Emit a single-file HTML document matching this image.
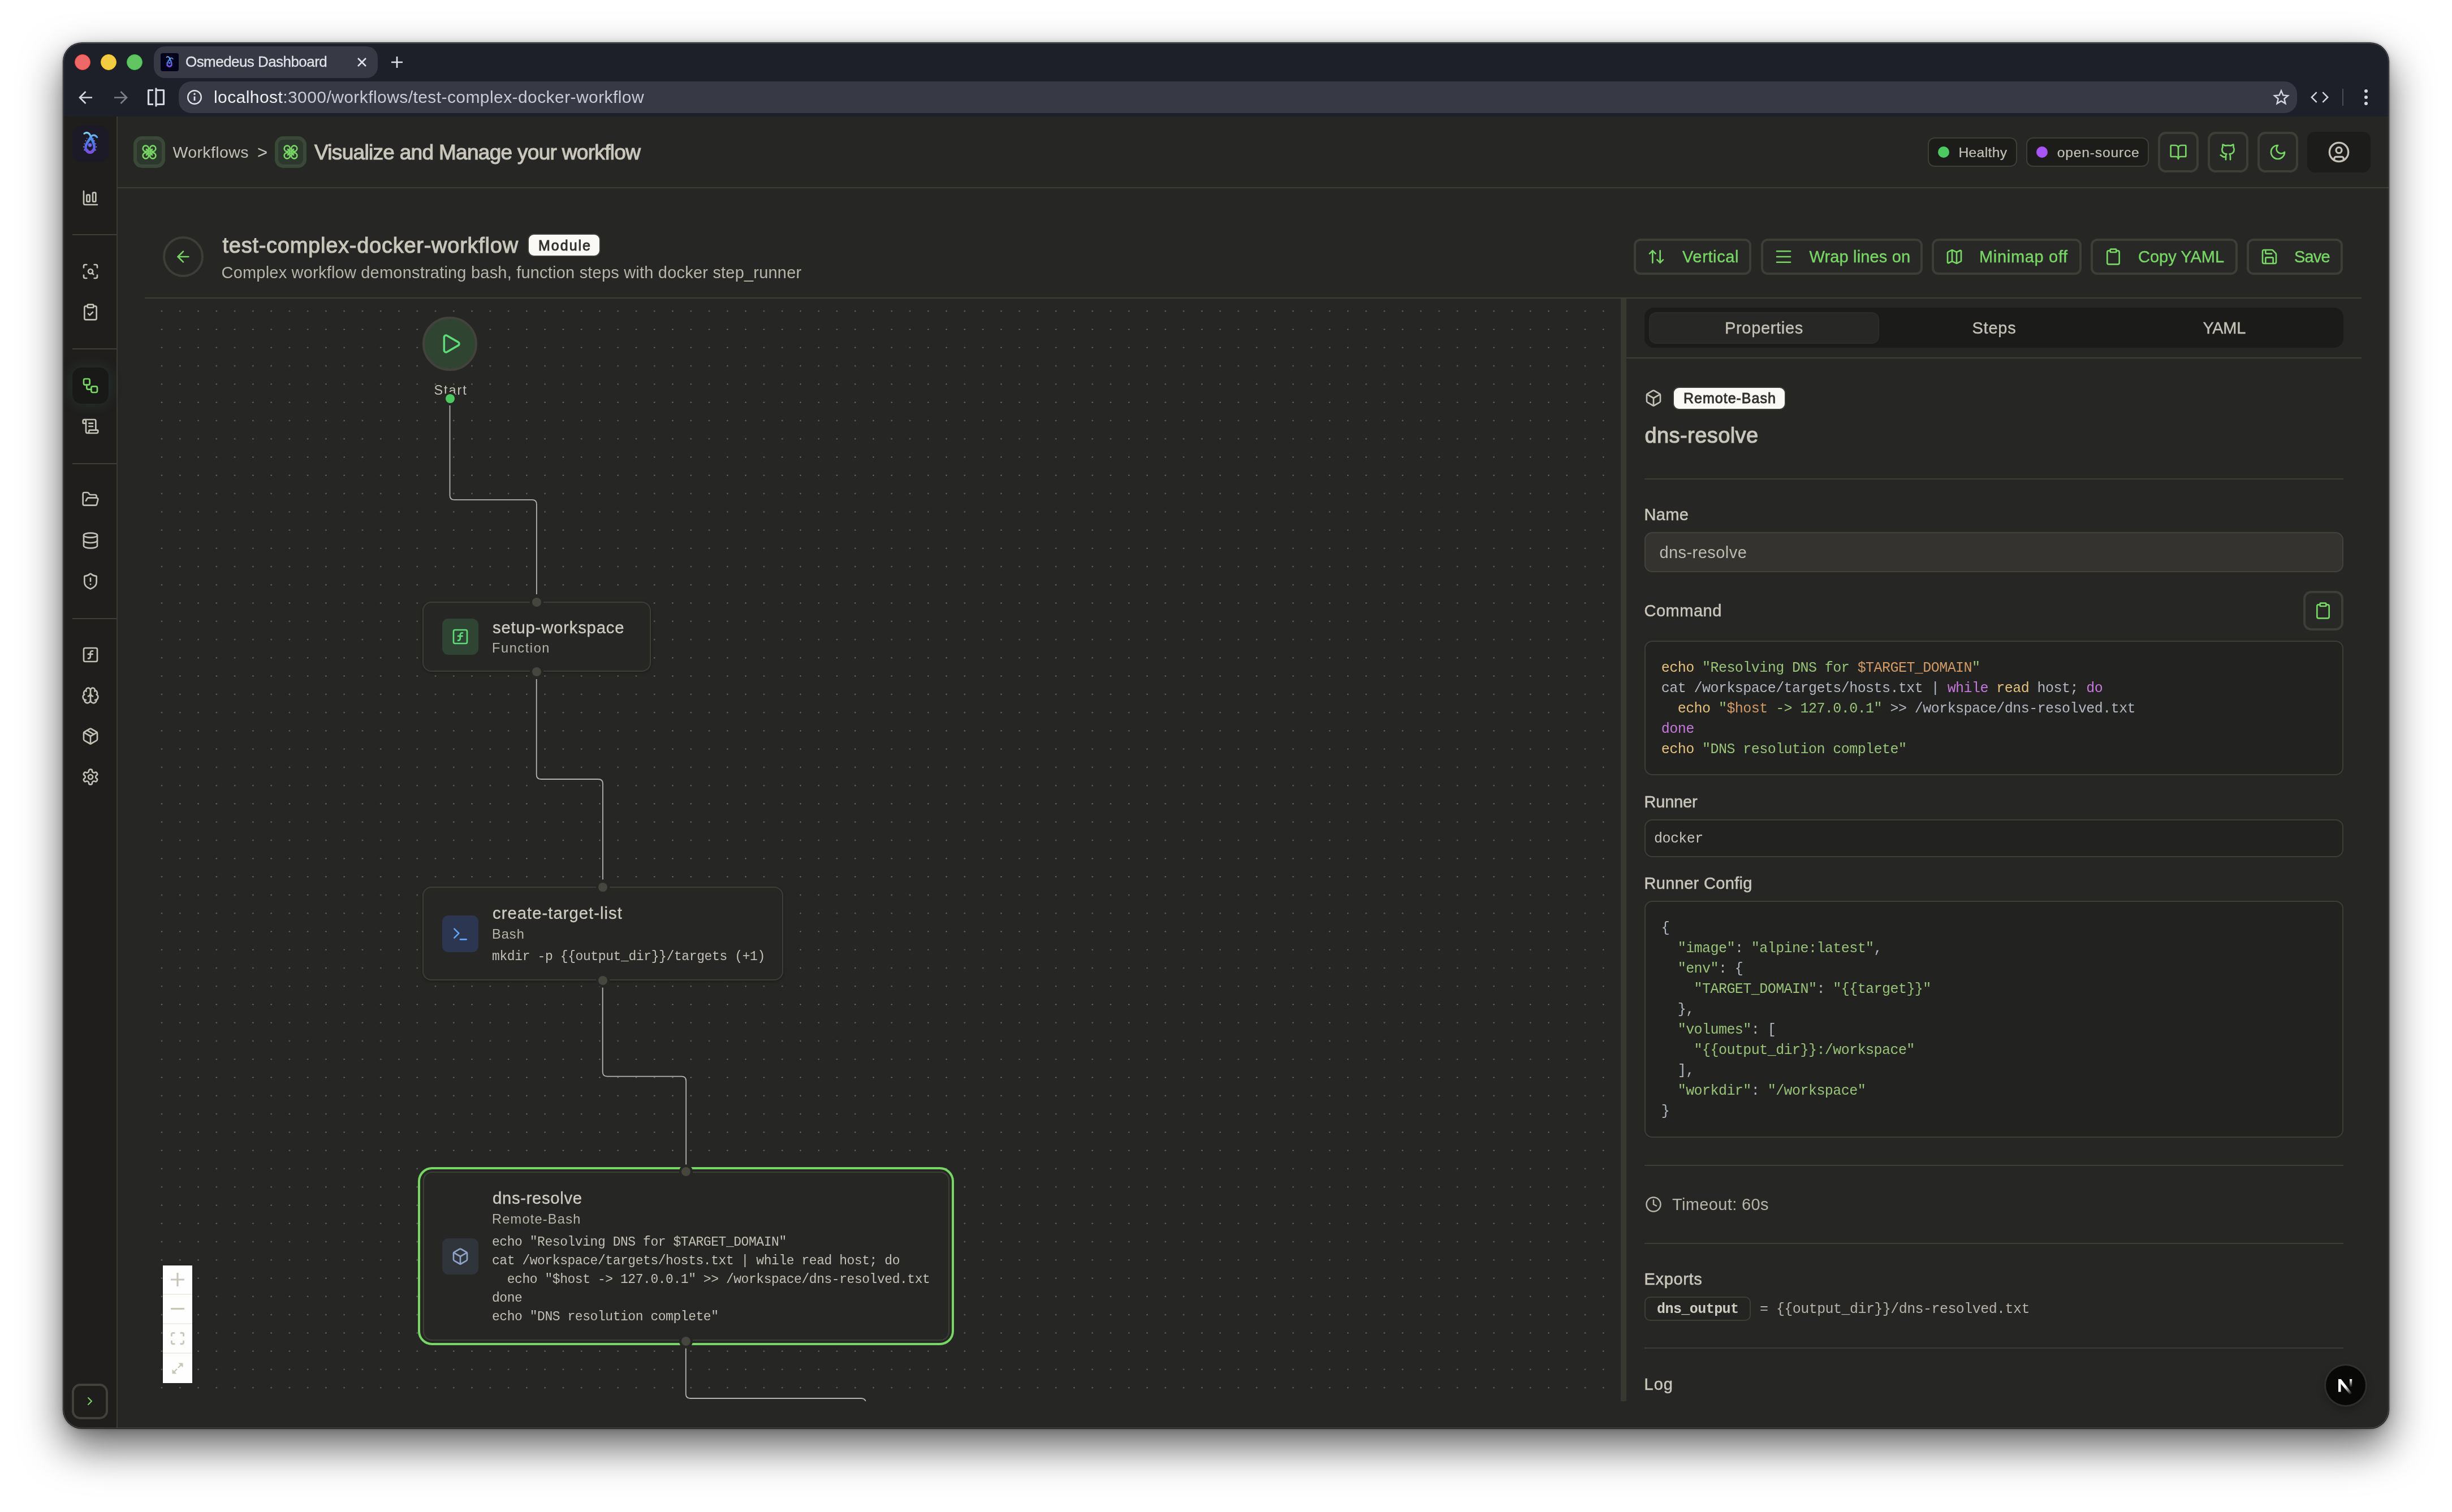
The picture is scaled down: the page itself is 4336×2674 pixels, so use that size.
<!DOCTYPE html>
<html lang="en"><head><meta charset="utf-8"><title>Osmedeus Dashboard</title>
<style>
html,body{margin:0;padding:0;background:#fff;}
body{width:4336px;height:2674px;position:relative;overflow:hidden;}
.a{position:absolute;box-sizing:border-box;}
.t{margin:0;padding:0;}
.ic{overflow:visible;}
#shadow{left:112px;top:76px;width:4112px;height:2450px;border-radius:33px;box-shadow:0 0 0 1px rgba(0,0,0,.9),0 0 4px 1px rgba(0,0,0,.3),0 32px 72px 2px rgba(0,0,0,.60),0 6px 20px rgba(0,0,0,.12);background:#262624;}
#win{left:112px;top:76px;width:4112px;height:2450px;border-radius:33px;overflow:hidden;background:#262624;}
#pg{left:-112px;top:-76px;width:4336px;height:2674px;will-change:transform;}
#rim{left:112px;top:76px;width:4112px;height:2450px;border-radius:33px;border:1.5px solid rgba(255,255,255,.24);pointer-events:none;}
</style></head><body>
<svg width="0" height="0" style="position:absolute"><defs>
<linearGradient id="lg" gradientUnits="userSpaceOnUse" x1="0" y1="10" x2="0" y2="50"><stop offset="0" stop-color="#97dff8"/><stop offset=".32" stop-color="#4b93ee"/><stop offset=".68" stop-color="#5668ea"/><stop offset="1" stop-color="#8649de"/></linearGradient>
<symbol id="logo" viewBox="0 0 64 64">
<g fill="none" stroke="url(#lg)" stroke-linecap="round" stroke-linejoin="round">
<path d="M32.500 21C35.500 26 38.700 32 38.700 38.500C38.700 44 35.500 47.300 31.200 47.300C26.800 47.300 23.400 44 23.400 38.500C23.400 32 29.500 26 32.500 21Z" stroke-width="4.500"/>
<path d="M25.500 43.500C27 46.500 29 47.500 31.200 47.500C33.500 47.500 35.500 46.500 37 43.500" stroke-width="5.200"/>
<path d="M32.500 21C31.500 15.500 27.500 9.500 21 14.300" stroke-width="3.200"/>
<path d="M32.500 21C33.500 17.500 39 14.500 43.700 20.700" stroke-width="3.200"/>
</g>
<circle cx="31.100" cy="34.600" r="3.300" fill="#6a6df5"/>
<g fill="#a48ff0"><circle cx="25.700" cy="22.800" r=".8"/><circle cx="23.500" cy="27" r=".9"/><circle cx="21.200" cy="32.300" r=".9"/><circle cx="19.800" cy="37.800" r="1"/><circle cx="21.300" cy="43.300" r="1"/><circle cx="37" cy="23.300" r=".8"/><circle cx="38.800" cy="27" r=".9"/><circle cx="41" cy="32.300" r=".9"/><circle cx="42.300" cy="37.800" r="1"/><circle cx="40.800" cy="43.300" r="1"/></g>
</symbol></defs></svg>
<div class="a" id="shadow"></div>
<div class="a" id="win"><div class="a" id="pg">
<div class="a" style="left:112.00px;top:75.00px;width:4112.00px;height:131.00px;background:#1d2029;"></div>
<div class="a" style="left:132.00px;top:96.00px;width:28.00px;height:28.00px;background:#ee6868;border-radius:14px;border:1.5px solid #f8463d;"></div>
<div class="a" style="left:178.00px;top:96.00px;width:28.00px;height:28.00px;background:#f3cc42;border-radius:14px;border:1.5px solid #f8c41a;"></div>
<div class="a" style="left:224.00px;top:96.00px;width:28.00px;height:28.00px;background:#63c562;border-radius:14px;border:1.5px solid #35c24a;"></div>
<div class="a" style="left:272.00px;top:82.00px;width:396.00px;height:56.00px;background:#373a45;border-radius:20px;"></div>
<div class="a" style="left:284.00px;top:94.00px;width:32.00px;height:32.00px;background:#04021a;border-radius:4px;"></div>
<svg class="a" style="left:284px;top:94px" width="32" height="32" viewBox="0 0 64 64"><use href="#logo"/></svg>
<span class="a t" id="tabtitle" style="left:328.00px;top:94.47px;font:400 26px/1 'Liberation Sans', sans-serif;line-height:normal;color:#e2e3e8;letter-spacing:-0.553px;white-space:pre;-webkit-text-stroke:0.3px #e2e3e8;">Osmedeus Dashboard</span>
<svg class="a" style="left:630px;top:100px" width="20" height="20" viewBox="0 0 20 20" stroke="#e2e3e8" stroke-width="2.6" fill="none"><path d="M3 3l14 14M17 3L3 17"/></svg>
<svg class="a" style="left:691px;top:99px" width="22" height="22" viewBox="0 0 22 22" stroke="#e2e3e8" stroke-width="2.6" fill="none"><path d="M11 1v20M1 11h20"/></svg>
<svg class="a" style="left:139px;top:160px" width="25" height="25" viewBox="0 0 25 25" stroke="#d5d6de" stroke-width="2.7" fill="none" stroke-linejoin="miter"><path d="M24 12.5H3M12.5 2L2 12.5 12.5 23"/></svg>
<svg class="a" style="left:201px;top:160px" width="25" height="25" viewBox="0 0 25 25" stroke="#7d7f8a" stroke-width="2.7" fill="none"><path d="M1 12.500H22M12.500 2L23 12.500 12.500 23"/></svg>
<svg class="a" style="left:260px;top:154px" width="32" height="36" viewBox="0 0 32 36" stroke="#d5d6de" stroke-width="3.200" fill="none" stroke-linejoin="round"><path d="M11 5.500H2.500v25H11M16 5.500h13.500v25H16M16 1.500v33"/></svg>
<div class="a" style="left:316.00px;top:144.00px;width:3746.00px;height:56.00px;background:#373a45;border-radius:22px;"></div>
<svg class="a" style="left:330px;top:158px" width="28" height="28" viewBox="0 0 28 28" fill="none" stroke="#e2e3e8" stroke-width="2.4"><circle cx="14" cy="14" r="11.800"/><path d="M14 12.500v7.500" stroke-width="2.8"/><circle cx="14" cy="8.300" r="1.700" fill="#e2e3e8" stroke="none"/></svg>
<span class="a t" id="url" style="left:378.00px;top:155.45px;font:400 30px/1 'Liberation Sans', sans-serif;line-height:normal;color:#c9cad3;letter-spacing:0.423px;white-space:pre;"><span style="color:#eeeef2">localhost</span>:3000/workflows/test-complex-docker-workflow</span>
<svg class="a" style="left:4019px;top:157px" width="30" height="30" viewBox="0 0 24 24" fill="none" stroke="#d5d6de" stroke-width="2" stroke-linejoin="miter"><path d="M12 2.800l2.700 6.300 6.800.6-5.200 4.500 1.600 6.700-5.900-3.600-5.900 3.600 1.600-6.700-5.200-4.500 6.800-.6z"/></svg>
<svg class="a" style="left:4086px;top:161px" width="32" height="22" viewBox="0 0 36 24" fill="none" stroke="#d5d6de" stroke-width="2.800"><path d="M12 2L2 12l10 10M24 2l10 10-10 10"/></svg>
<div class="a" style="left:4142.00px;top:157.00px;width:2.00px;height:30.00px;background:#4a4c58;"></div>
<div class="a" style="left:4181.00px;top:158.00px;width:6.00px;height:6.00px;background:#d5d6de;border-radius:3px;"></div>
<div class="a" style="left:4181.00px;top:169.00px;width:6.00px;height:6.00px;background:#d5d6de;border-radius:3px;"></div>
<div class="a" style="left:4181.00px;top:180.00px;width:6.00px;height:6.00px;background:#d5d6de;border-radius:3px;"></div>
<div class="a" style="left:112.00px;top:206.00px;width:4112.00px;height:2319.00px;background:#262624;"></div>
<div class="a" style="left:112.00px;top:206.00px;width:95.00px;height:2319.00px;background:#1f1e1d;"></div>
<div class="a" style="left:206.00px;top:206.00px;width:2.00px;height:2319.00px;background:#3b3b36;"></div>
<div class="a" style="left:208.00px;top:331.00px;width:4016.00px;height:2.00px;background:#3e3e38;"></div>
<div class="a" style="left:128.00px;top:222.00px;width:64.00px;height:64.00px;background:#1c1a27;border-radius:16px;"></div>
<svg class="a" style="left:128px;top:222px" width="64" height="64" viewBox="0 0 64 64"><use href="#logo"/></svg>
<svg class="a ic" style="left:143.50px;top:334.00px;" width="32" height="32" viewBox="0 0 24 24" fill="none" stroke="#c3c0b6" stroke-width="2" stroke-linecap="round" stroke-linejoin="round"><path d="M3 3v16a2 2 0 0 0 2 2h16"/><rect x="15" y="5" width="4" height="12" rx="1"/><rect x="7" y="8" width="4" height="9" rx="1"/></svg>
<div class="a" style="left:128.00px;top:414.00px;width:78.00px;height:2.00px;background:#3e3e38;"></div>
<svg class="a ic" style="left:143.50px;top:464.00px;" width="32" height="32" viewBox="0 0 24 24" fill="none" stroke="#c3c0b6" stroke-width="2" stroke-linecap="round" stroke-linejoin="round"><path d="M3 7V5a2 2 0 0 1 2-2h2"/><path d="M17 3h2a2 2 0 0 1 2 2v2"/><path d="M21 17v2a2 2 0 0 1-2 2h-2"/><path d="M7 21H5a2 2 0 0 1-2-2v-2"/><circle cx="12" cy="12" r="3"/><path d="m16 16-1.9-1.9"/></svg>
<svg class="a ic" style="left:143.50px;top:536.00px;" width="32" height="32" viewBox="0 0 24 24" fill="none" stroke="#c3c0b6" stroke-width="2" stroke-linecap="round" stroke-linejoin="round"><rect x="8" y="2" width="8" height="4" rx="1" ry="1"/><path d="M16 4h2a2 2 0 0 1 2 2v14a2 2 0 0 1-2 2H6a2 2 0 0 1-2-2V6a2 2 0 0 1 2-2h2"/><path d="m9 14 2 2 4-4"/></svg>
<div class="a" style="left:128.00px;top:616.00px;width:78.00px;height:2.00px;background:#3e3e38;"></div>
<div class="a" style="left:128.00px;top:650.00px;width:64.00px;height:64.00px;background:#191917;border-radius:16px;box-shadow:0 0 24px rgba(90,170,150,.18);"></div>
<svg class="a ic" style="left:143.50px;top:666.00px;" width="32" height="32" viewBox="0 0 24 24" fill="none" stroke="#78d665" stroke-width="2" stroke-linecap="round" stroke-linejoin="round"><rect x="3" y="3" width="8" height="8" rx="2"/><path d="M7 11v4a2 2 0 0 0 2 2h4"/><rect x="13" y="13" width="8" height="8" rx="2"/></svg>
<svg class="a ic" style="left:143.50px;top:738.00px;" width="32" height="32" viewBox="0 0 24 24" fill="none" stroke="#c3c0b6" stroke-width="2" stroke-linecap="round" stroke-linejoin="round"><path d="M15 12h-5"/><path d="M15 8h-5"/><path d="M19 17V5a2 2 0 0 0-2-2H4"/><path d="M8 21h12a2 2 0 0 0 2-2v-1a1 1 0 0 0-1-1H11a1 1 0 0 0-1 1v1a2 2 0 1 1-4 0V5a2 2 0 1 0-4 0v2a1 1 0 0 0 1 1h3"/></svg>
<div class="a" style="left:128.00px;top:818.50px;width:78.00px;height:2.00px;background:#3e3e38;"></div>
<svg class="a ic" style="left:143.50px;top:867.00px;" width="32" height="32" viewBox="0 0 24 24" fill="none" stroke="#c3c0b6" stroke-width="2" stroke-linecap="round" stroke-linejoin="round"><path d="m6 14 1.5-2.9A2 2 0 0 1 9.24 10H20a2 2 0 0 1 1.94 2.5l-1.54 6a2 2 0 0 1-1.95 1.5H4a2 2 0 0 1-2-2V5a2 2 0 0 1 2-2h3.9a2 2 0 0 1 1.69.9l.81 1.2a2 2 0 0 0 1.67.9H18a2 2 0 0 1 2 2v2"/></svg>
<svg class="a ic" style="left:143.50px;top:940.00px;" width="32" height="32" viewBox="0 0 24 24" fill="none" stroke="#c3c0b6" stroke-width="2" stroke-linecap="round" stroke-linejoin="round"><ellipse cx="12" cy="5" rx="9" ry="3"/><path d="M3 5V19A9 3 0 0 0 21 19V5"/><path d="M3 12A9 3 0 0 0 21 12"/></svg>
<svg class="a ic" style="left:143.50px;top:1012.00px;" width="32" height="32" viewBox="0 0 24 24" fill="none" stroke="#c3c0b6" stroke-width="2" stroke-linecap="round" stroke-linejoin="round"><path d="M20 13c0 5-3.5 7.5-7.66 8.95a1 1 0 0 1-.67-.01C7.5 20.5 4 18 4 13V6a1 1 0 0 1 1-1c2 0 4.5-1.2 6.24-2.72a1.17 1.17 0 0 1 1.52 0C14.51 3.81 17 5 19 5a1 1 0 0 1 1 1z"/><path d="M12 8v4"/><path d="M12 16h.01"/></svg>
<div class="a" style="left:128.00px;top:1092.50px;width:78.00px;height:2.00px;background:#3e3e38;"></div>
<svg class="a ic" style="left:143.50px;top:1142.00px;" width="32" height="32" viewBox="0 0 24 24" fill="none" stroke="#c3c0b6" stroke-width="2" stroke-linecap="round" stroke-linejoin="round"><rect width="18" height="18" x="3" y="3" rx="2" ry="2"/><path d="M9 17c2 0 2.8-1 2.8-2.8V10c0-2 1-3.3 3.2-3"/><path d="M9 11.2h5.7"/></svg>
<svg class="a ic" style="left:143.50px;top:1214.00px;" width="32" height="32" viewBox="0 0 24 24" fill="none" stroke="#c3c0b6" stroke-width="2" stroke-linecap="round" stroke-linejoin="round"><path d="M12 18V5"/><path d="M15 13a4.17 4.17 0 0 1-3-4 4.17 4.17 0 0 1-3 4"/><path d="M17.598 6.5A3 3 0 1 0 12 5a3 3 0 1 0-5.598 1.5"/><path d="M17.997 5.125a4 4 0 0 1 2.526 5.77"/><path d="M18 18a4 4 0 0 0 2-7.464"/><path d="M19.967 17.483A4 4 0 1 1 12 18a4 4 0 1 1-7.967-.517"/><path d="M6 18a4 4 0 0 1-2-7.464"/><path d="M6.003 5.125a4 4 0 0 0-2.526 5.77"/></svg>
<svg class="a ic" style="left:143.50px;top:1286.00px;" width="32" height="32" viewBox="0 0 24 24" fill="none" stroke="#c3c0b6" stroke-width="2" stroke-linecap="round" stroke-linejoin="round"><path d="M11 21.73a2 2 0 0 0 2 0l7-4A2 2 0 0 0 21 16V8a2 2 0 0 0-1-1.73l-7-4a2 2 0 0 0-2 0l-7 4A2 2 0 0 0 3 8v8a2 2 0 0 0 1 1.73z"/><path d="M12 22V12"/><path d="m3.3 7 8.7 5 8.7-5"/><path d="m7.5 4.27 9 5.15"/></svg>
<svg class="a ic" style="left:143.50px;top:1358.00px;" width="32" height="32" viewBox="0 0 24 24" fill="none" stroke="#c3c0b6" stroke-width="2" stroke-linecap="round" stroke-linejoin="round"><path d="M12.22 2h-.44a2 2 0 0 0-2 2v.18a2 2 0 0 1-1 1.73l-.43.25a2 2 0 0 1-2 0l-.15-.08a2 2 0 0 0-2.73.73l-.22.38a2 2 0 0 0 .73 2.73l.15.1a2 2 0 0 1 1 1.72v.51a2 2 0 0 1-1 1.74l-.15.09a2 2 0 0 0-.73 2.73l.22.38a2 2 0 0 0 2.73.73l.15-.08a2 2 0 0 1 2 0l.43.25a2 2 0 0 1 1 1.73V20a2 2 0 0 0 2 2h.44a2 2 0 0 0 2-2v-.18a2 2 0 0 1 1-1.73l.43-.25a2 2 0 0 1 2 0l.15.08a2 2 0 0 0 2.73-.73l.22-.39a2 2 0 0 0-.73-2.73l-.15-.08a2 2 0 0 1-1-1.74v-.5a2 2 0 0 1 1-1.74l.15-.09a2 2 0 0 0 .73-2.73l-.22-.38a2 2 0 0 0-2.73-.73l-.15.08a2 2 0 0 1-2 0l-.43-.25a2 2 0 0 1-1-1.73V4a2 2 0 0 0-2-2z"/><circle cx="12" cy="12" r="3"/></svg>
<div class="a" style="left:127.00px;top:2446.50px;width:64.00px;height:63.50px;background:#1f1e1d;border-radius:15px;border:4px solid #41423b;"></div>
<svg class="a ic" style="left:147.00px;top:2466.00px;" width="24" height="24" viewBox="0 0 24 24" fill="none" stroke="#78d665" stroke-width="2" stroke-linecap="round" stroke-linejoin="round"><path d="m9 18 6-6-6-6"/></svg>
<div class="a" style="left:236.00px;top:241.00px;width:56.00px;height:56.00px;background:#374a36;border-radius:15px;"></div>
<div class="a" style="left:240.00px;top:245.00px;width:48.00px;height:48.00px;background:#2d382c;border-radius:11px;border:2px solid #42443f;"></div>
<svg class="a ic" style="left:248.00px;top:253.00px;" width="32" height="32" viewBox="0 0 24 24" fill="none" stroke="#78d665" stroke-width="2" stroke-linecap="round" stroke-linejoin="round"><circle cx="7.300" cy="7.300" r="3.800"/><circle cx="16.700" cy="7.300" r="3.800"/><circle cx="7.300" cy="16.700" r="3.800"/><circle cx="16.700" cy="16.700" r="3.800"/><path d="M10.600 10.600 8.200 8.200"/><path d="M13.400 10.600 15.800 8.200"/><path d="M10.600 13.400 8.200 15.800"/><path d="M13.400 13.400 15.800 15.800"/><rect x="10.600" y="10.600" width="2.800" height="2.800" rx=".4"/></svg>
<span class="a t" id="crumb1" style="left:305.50px;top:252.91px;font:400 28.5px/1 'Liberation Sans', sans-serif;line-height:normal;color:#c3c0b6;letter-spacing:0.375px;white-space:pre;">Workflows</span>
<span class="a t" id="crumbgt" style="left:455.00px;top:252.44px;font:400 31px/1 'Liberation Sans', sans-serif;line-height:normal;color:#c3c0b6;letter-spacing:0.000px;white-space:pre;">&gt;</span>
<div class="a" style="left:486.00px;top:241.00px;width:56.00px;height:56.00px;background:#374a36;border-radius:15px;"></div>
<div class="a" style="left:490.00px;top:245.00px;width:48.00px;height:48.00px;background:#2d382c;border-radius:11px;border:2px solid #42443f;"></div>
<svg class="a ic" style="left:498.00px;top:253.00px;" width="32" height="32" viewBox="0 0 24 24" fill="none" stroke="#78d665" stroke-width="2" stroke-linecap="round" stroke-linejoin="round"><circle cx="7.300" cy="7.300" r="3.800"/><circle cx="16.700" cy="7.300" r="3.800"/><circle cx="7.300" cy="16.700" r="3.800"/><circle cx="16.700" cy="16.700" r="3.800"/><path d="M10.600 10.600 8.200 8.200"/><path d="M13.400 10.600 15.800 8.200"/><path d="M10.600 13.400 8.200 15.800"/><path d="M13.400 13.400 15.800 15.800"/><rect x="10.600" y="10.600" width="2.800" height="2.800" rx=".4"/></svg>
<span class="a t" id="htitle" style="left:556.00px;top:249.21px;font:400 37px/1 'Liberation Sans', sans-serif;line-height:normal;color:#c9c6bc;letter-spacing:-0.697px;white-space:pre;-webkit-text-stroke:1.1px #c9c6bc;">Visualize and Manage your workflow</span>
<div class="a" style="left:3409.00px;top:243.00px;width:157.50px;height:52.00px;background:#1c1c1a;border-radius:12px;border:2px solid #3e3e38;"></div>
<div class="a" style="left:3427.00px;top:259.00px;width:20.00px;height:20.00px;background:#4dc962;border-radius:10px;"></div>
<span class="a t" id="healthy" style="left:3463.40px;top:255.65px;font:400 24.7px/1 'Liberation Sans', sans-serif;line-height:normal;color:#c3c0b6;letter-spacing:0.333px;white-space:pre;-webkit-text-stroke:0.2px #c3c0b6;">Healthy</span>
<div class="a" style="left:3583.00px;top:243.00px;width:217.00px;height:52.00px;background:#1c1c1a;border-radius:12px;border:2px solid #3e3e38;"></div>
<div class="a" style="left:3601.00px;top:259.00px;width:20.00px;height:20.00px;background:#a855f7;border-radius:10px;"></div>
<span class="a t" id="opensrc" style="left:3637.80px;top:255.65px;font:400 24.7px/1 'Liberation Sans', sans-serif;line-height:normal;color:#c3c0b6;letter-spacing:0.770px;white-space:pre;-webkit-text-stroke:0.2px #c3c0b6;">open-source</span>
<div class="a" style="left:3816.00px;top:233.00px;width:72.00px;height:72.00px;background:#282826;border-radius:14px;border:4px solid #3e3e38;"></div>
<svg class="a ic" style="left:3836.00px;top:253.00px;" width="32" height="32" viewBox="0 0 24 24" fill="none" stroke="#78d665" stroke-width="2" stroke-linecap="round" stroke-linejoin="round"><path d="M12 7v14"/><path d="M3 18a1 1 0 0 1-1-1V4a1 1 0 0 1 1-1h5a4 4 0 0 1 4 4 4 4 0 0 1 4-4h5a1 1 0 0 1 1 1v13a1 1 0 0 1-1 1h-6a3 3 0 0 0-3 3 3 3 0 0 0-3-3z"/></svg>
<div class="a" style="left:3904.00px;top:233.00px;width:72.00px;height:72.00px;background:#282826;border-radius:14px;border:4px solid #3e3e38;"></div>
<svg class="a ic" style="left:3924.00px;top:253.00px;" width="32" height="32" viewBox="0 0 24 24" fill="none" stroke="#78d665" stroke-width="2" stroke-linecap="round" stroke-linejoin="round"><path d="M15 22v-4a4.8 4.8 0 0 0-1-3.5c3 0 6-2 6-5.500.08-1.250-.27-2.480-1-3.500.28-1.150.28-2.350 0-3.500 0 0-1 0-3 1.500-2.640-.5-5.360-.5-8 0C6 2 5 2 5 2c-.3 1.150-.3 2.350 0 3.500A5.403 5.403 0 0 0 4 9c0 3.500 3 5.500 6 5.500-.39.490-.68 1.050-.85 1.650-.17.600-.22 1.230-.15 1.850v4"/><path d="M9 18c-4.510 2-5-2-7-2"/></svg>
<div class="a" style="left:3992.00px;top:233.00px;width:72.00px;height:72.00px;background:#282826;border-radius:14px;border:4px solid #3e3e38;"></div>
<svg class="a ic" style="left:4012.00px;top:253.00px;" width="32" height="32" viewBox="0 0 24 24" fill="none" stroke="#78d665" stroke-width="2" stroke-linecap="round" stroke-linejoin="round"><path d="M12 3a6 6 0 0 0 9 9 9 9 0 1 1-9-9Z"/></svg>
<div class="a" style="left:4080.00px;top:233.00px;width:112.00px;height:72.00px;background:#1c1c1a;border-radius:14px;"></div>
<svg class="a ic" style="left:4116.00px;top:249.00px;" width="40" height="40" viewBox="0 0 24 24" fill="none" stroke="#c3c0b6" stroke-width="2" stroke-linecap="round" stroke-linejoin="round"><circle cx="12" cy="12" r="10"/><circle cx="12" cy="10" r="3"/><path d="M7 20.662V19a2 2 0 0 1 2-2h6a2 2 0 0 1 2 2v1.662"/></svg>
<div class="a" style="left:288.00px;top:418.00px;width:72.00px;height:72.00px;background:#262624;border-radius:36px;border:4px solid #3e3e38;"></div>
<svg class="a ic" style="left:308.00px;top:438.00px;" width="32" height="32" viewBox="0 0 24 24" fill="none" stroke="#78d665" stroke-width="2" stroke-linecap="round" stroke-linejoin="round"><path d="m12 19-7-7 7-7"/><path d="M19 12H5"/></svg>
<span class="a t" id="wtitle" style="left:393.50px;top:412.61px;font:400 38px/1 'Liberation Sans', sans-serif;line-height:normal;color:#c9c6bc;letter-spacing:0.741px;white-space:pre;-webkit-text-stroke:1.1px #c9c6bc;">test-complex-docker-workflow</span>
<div class="a" style="left:933.00px;top:412.50px;width:129.00px;height:41.50px;background:#faf9f5;border-radius:11px;border:2px solid #3a3a36;"></div>
<span class="a t" id="module" style="left:952.00px;top:419.88px;font:400 25px/1 'Liberation Sans', sans-serif;line-height:normal;color:#30302e;letter-spacing:2.000px;white-space:pre;-webkit-text-stroke:0.9px #30302e;">Module</span>
<span class="a t" id="wdesc" style="left:391.50px;top:466.25px;font:400 29px/1 'Liberation Sans', sans-serif;line-height:normal;color:#b7b5a9;letter-spacing:0.203px;white-space:pre;">Complex workflow demonstrating bash, function steps with docker step_runner</span>
<div class="a" style="left:2889.00px;top:422.00px;width:208.00px;height:64.00px;background:#282826;border-radius:12px;border:4px solid #3e3e38;"></div>
<svg class="a ic" style="left:2913.00px;top:438.00px;" width="32" height="32" viewBox="0 0 24 24" fill="none" stroke="#78d665" stroke-width="2" stroke-linecap="round" stroke-linejoin="round"><path d="m21 16-4 4-4-4"/><path d="M17 20V4"/><path d="m3 8 4-4 4 4"/><path d="M7 4v16"/></svg>
<span class="a t" id="b1" style="left:2975.00px;top:437.75px;font:400 29px/1 'Liberation Sans', sans-serif;line-height:normal;color:#78d665;letter-spacing:0.629px;white-space:pre;-webkit-text-stroke:0.4px #78d665;">Vertical</span>
<div class="a" style="left:3113.50px;top:422.00px;width:286.30px;height:64.00px;background:#282826;border-radius:12px;border:4px solid #3e3e38;"></div>
<svg class="a ic" style="left:3137.50px;top:438.00px;" width="32" height="32" viewBox="0 0 24 24" fill="none" stroke="#78d665" stroke-width="2" stroke-linecap="round" stroke-linejoin="round"><path d="M3 12h18"/><path d="M3 19.300h18"/><path d="M3 4.700h18"/></svg>
<span class="a t" id="b2" style="left:3199.50px;top:437.75px;font:400 29px/1 'Liberation Sans', sans-serif;line-height:normal;color:#78d665;letter-spacing:0.150px;white-space:pre;-webkit-text-stroke:0.4px #78d665;">Wrap lines on</span>
<div class="a" style="left:3416.20px;top:422.00px;width:264.50px;height:64.00px;background:#282826;border-radius:12px;border:4px solid #3e3e38;"></div>
<svg class="a ic" style="left:3440.20px;top:438.00px;" width="32" height="32" viewBox="0 0 24 24" fill="none" stroke="#78d665" stroke-width="2" stroke-linecap="round" stroke-linejoin="round"><path d="M14.106 5.553a2 2 0 0 0 1.788 0l3.659-1.830A1 1 0 0 1 21 4.619v12.764a1 1 0 0 1-.553.894l-4.553 2.277a2 2 0 0 1-1.788 0l-4.212-2.106a2 2 0 0 0-1.788 0l-3.659 1.830A1 1 0 0 1 3 19.381V6.618a1 1 0 0 1 .553-.894l4.553-2.277a2 2 0 0 1 1.788 0z"/><path d="M15 5.764v15"/><path d="M9 3.236v15"/></svg>
<span class="a t" id="b3" style="left:3500.00px;top:437.75px;font:400 29px/1 'Liberation Sans', sans-serif;line-height:normal;color:#78d665;letter-spacing:0.680px;white-space:pre;-webkit-text-stroke:0.4px #78d665;">Minimap off</span>
<div class="a" style="left:3697.20px;top:422.00px;width:259.60px;height:64.00px;background:#282826;border-radius:12px;border:4px solid #3e3e38;"></div>
<svg class="a ic" style="left:3721.20px;top:438.00px;" width="32" height="32" viewBox="0 0 24 24" fill="none" stroke="#78d665" stroke-width="2" stroke-linecap="round" stroke-linejoin="round"><rect x="8" y="2" width="8" height="4" rx="1" ry="1"/><path d="M16 4h2a2 2 0 0 1 2 2v14a2 2 0 0 1-2 2H6a2 2 0 0 1-2-2V6a2 2 0 0 1 2-2h2"/></svg>
<span class="a t" id="b4" style="left:3781.00px;top:437.75px;font:400 29px/1 'Liberation Sans', sans-serif;line-height:normal;color:#78d665;letter-spacing:0.000px;white-space:pre;-webkit-text-stroke:0.4px #78d665;">Copy YAML</span>
<div class="a" style="left:3973.20px;top:422.00px;width:170.30px;height:64.00px;background:#282826;border-radius:12px;border:4px solid #3e3e38;"></div>
<svg class="a ic" style="left:3997.20px;top:438.00px;" width="32" height="32" viewBox="0 0 24 24" fill="none" stroke="#78d665" stroke-width="2" stroke-linecap="round" stroke-linejoin="round"><path d="M15.2 3a2 2 0 0 1 1.4.6l3.800 3.800a2 2 0 0 1 .6 1.400V19a2 2 0 0 1-2 2H5a2 2 0 0 1-2-2V5a2 2 0 0 1 2-2z"/><path d="M17 21v-7a1 1 0 0 0-1-1H8a1 1 0 0 0-1 1v7"/><path d="M7 3v4a1 1 0 0 0 1 1h7"/></svg>
<span class="a t" id="b5" style="left:4057.00px;top:437.75px;font:400 29px/1 'Liberation Sans', sans-serif;line-height:normal;color:#78d665;letter-spacing:-0.800px;white-space:pre;-webkit-text-stroke:0.4px #78d665;">Save</span>
<div class="a" style="left:256.00px;top:526.00px;width:3920.00px;height:2.00px;background:#3e3e38;"></div>
<div class="a" id="canvas" style="left:256px;top:528px;width:2610px;height:1950px;overflow:hidden;">
<svg class="a" style="left:0;top:0" width="2610" height="1950"><defs><pattern id="dots" x="13.865" y="6.065" width="32.27" height="32.27" patternUnits="userSpaceOnUse"><circle cx="16.135" cy="16.135" r="1.080" fill="#87878f"/></pattern></defs><rect x="0" y="0" width="100%" height="100%" fill="url(#dots)"/></svg>
<div class="a" style="left:-256px;top:-528px;width:4336px;height:2674px;">
<svg class="a" style="left:0;top:0" width="4336" height="2674" fill="none" stroke="#b4b4b4" stroke-width="1.800"><path d="M795.500 716V875.9Q795.500 883.900 803.5 883.900H940.9Q948.900 883.900 948.900 891.9V1051"/></svg>
<svg class="a" style="left:0;top:0" width="4336" height="2674" fill="none" stroke="#b4b4b4" stroke-width="1.800"><path d="M948.700 1201V1370Q948.700 1378 956.7 1378H1058Q1066 1378 1066 1386V1555.500"/></svg>
<svg class="a" style="left:0;top:0" width="4336" height="2674" fill="none" stroke="#b4b4b4" stroke-width="1.800"><path d="M1065.700 1746.500V1895.6Q1065.700 1903.600 1073.7 1903.600H1205.2Q1213.200 1903.600 1213.200 1911.6V2059.500"/></svg>
<svg class="a" style="left:0;top:0" width="4336" height="2674" fill="none" stroke="#b4b4b4" stroke-width="1.800"><path d="M1212.800 2384.500V2465Q1212.800 2473 1220.8 2473H1523Q1531 2473 1531 2481V2600"/></svg>
<div class="a" style="left:747.30px;top:559.60px;width:96.70px;height:96.70px;background:#2f4431;border-radius:49px;border:4px solid #42433d;"></div>
<svg class="a ic" style="left:776.50px;top:588.00px;" width="40" height="40" viewBox="0 0 24 24" fill="none" stroke="#5edc7a" stroke-width="2.1" stroke-linecap="round" stroke-linejoin="round"><path d="M5 5a2 2 0 0 1 3.008-1.728l11.997 6.998a2 2 0 0 1 .003 3.458l-12 7A2 2 0 0 1 5 19z"/></svg>
<span class="a t" id="start" style="left:767.50px;top:677.03px;font:400 23.5px/1 'Liberation Sans', sans-serif;line-height:normal;color:#c3c0b6;letter-spacing:1.900px;white-space:pre;">Start</span>
<div class="a" style="left:787.50px;top:696.70px;width:16.00px;height:16.00px;background:#4dc962;border-radius:8px;box-shadow:0 0 0 4px #262624;"></div>
<div class="a" style="left:747.30px;top:1063.70px;width:403.50px;height:124.70px;background:#262624;border-radius:16px;border:2px solid #3e3e38;box-shadow:0 2px 5px rgba(0,0,0,.25);"></div>
<div class="a" style="left:781.60px;top:1094.00px;width:64.30px;height:64.30px;background:#2f4433;border-radius:11px;"></div>
<svg class="a ic" style="left:797.70px;top:1110.20px;" width="32" height="32" viewBox="0 0 24 24" fill="none" stroke="#5edc7a" stroke-width="2" stroke-linecap="round" stroke-linejoin="round"><rect width="18" height="18" x="3" y="3" rx="2" ry="2"/><path d="M9 17c2 0 2.8-1 2.8-2.8V10c0-2 1-3.3 3.2-3"/><path d="M9 11.2h5.7"/></svg>
<span class="a t" id="n1t" style="left:871.00px;top:1093.48px;font:400 29.3px/1 'Liberation Sans', sans-serif;line-height:normal;color:#cfccc2;letter-spacing:0.786px;white-space:pre;-webkit-text-stroke:0.3px #cfccc2;">setup-workspace</span>
<span class="a t" id="n1s" style="left:870.00px;top:1133.44px;font:400 23.6px/1 'Liberation Sans', sans-serif;line-height:normal;color:#b7b5a9;letter-spacing:1.571px;white-space:pre;">Function</span>
<div class="a" style="left:940.70px;top:1056.50px;width:16.00px;height:16.00px;background:#45463e;border-radius:8px;box-shadow:0 0 0 4px #262624;"></div>
<div class="a" style="left:940.70px;top:1180.30px;width:16.00px;height:16.00px;background:#45463e;border-radius:8px;box-shadow:0 0 0 4px #262624;"></div>
<div class="a" style="left:747.30px;top:1568.30px;width:638.00px;height:165.70px;background:#262624;border-radius:16px;border:2px solid #3e3e38;box-shadow:0 2px 5px rgba(0,0,0,.25);"></div>
<div class="a" style="left:781.60px;top:1619.40px;width:64.30px;height:64.30px;background:#2c3650;border-radius:11px;"></div>
<svg class="a ic" style="left:797.70px;top:1635.60px;" width="32" height="32" viewBox="0 0 24 24" fill="none" stroke="#60a5fa" stroke-width="2" stroke-linecap="round" stroke-linejoin="round"><path d="m4 17 6-6-6-6"/><path d="M12 19h8"/></svg>
<span class="a t" id="n2t" style="left:871.00px;top:1597.98px;font:400 29.3px/1 'Liberation Sans', sans-serif;line-height:normal;color:#cfccc2;letter-spacing:1.012px;white-space:pre;-webkit-text-stroke:0.3px #cfccc2;">create-target-list</span>
<span class="a t" id="n2s" style="left:870.00px;top:1638.64px;font:400 23.6px/1 'Liberation Sans', sans-serif;line-height:normal;color:#b7b5a9;letter-spacing:1.000px;white-space:pre;">Bash</span>
<span class="a t" id="n2c" style="left:870.00px;top:1679.33px;font:400 23px/1 'Liberation Mono', monospace;line-height:normal;color:#c3c0b6;letter-spacing:-0.389px;white-space:pre;">mkdir -p {{output_dir}}/targets (+1)</span>
<div class="a" style="left:1057.70px;top:1560.50px;width:16.00px;height:16.00px;background:#45463e;border-radius:8px;box-shadow:0 0 0 4px #262624;"></div>
<div class="a" style="left:1057.70px;top:1726.20px;width:16.00px;height:16.00px;background:#45463e;border-radius:8px;box-shadow:0 0 0 4px #262624;"></div>
<div class="a" style="left:739.00px;top:2063.80px;width:948.30px;height:315.40px;background:#262624;border-radius:25px;border:4.400px solid #78d665;"></div>
<div class="a" style="left:747.50px;top:2072.00px;width:931.70px;height:299.20px;background:#262624;border-radius:16px;border:2px solid #3e3e38;"></div>
<div class="a" style="left:781.60px;top:2190.00px;width:64.40px;height:64.40px;background:#30353c;border-radius:11px;"></div>
<svg class="a ic" style="left:797.70px;top:2206.30px;" width="32" height="32" viewBox="0 0 24 24" fill="none" stroke="#8fa3c9" stroke-width="2" stroke-linecap="round" stroke-linejoin="round"><path d="M21 8a2 2 0 0 0-1-1.730l-7-4a2 2 0 0 0-2 0l-7 4A2 2 0 0 0 3 8v8a2 2 0 0 0 1 1.730l7 4a2 2 0 0 0 2 0l7-4A2 2 0 0 0 21 16Z"/><path d="m3.3 7 8.700 5 8.700-5"/><path d="M12 22V12"/></svg>
<span class="a t" id="n3t" style="left:871.00px;top:2102.08px;font:400 29.3px/1 'Liberation Sans', sans-serif;line-height:normal;color:#cfccc2;letter-spacing:0.660px;white-space:pre;-webkit-text-stroke:0.3px #cfccc2;">dns-resolve</span>
<span class="a t" id="n3s" style="left:870.00px;top:2142.84px;font:400 23.6px/1 'Liberation Sans', sans-serif;line-height:normal;color:#b7b5a9;letter-spacing:1.200px;white-space:pre;">Remote-Bash</span>
<span class="a t" id="n3c0" style="left:870.00px;top:2183.63px;font:400 23px/1 'Liberation Mono', monospace;line-height:normal;color:#c3c0b6;letter-spacing:-0.450px;white-space:pre;">echo &quot;Resolving DNS for $TARGET_DOMAIN&quot;</span>
<span class="a t" id="n3c1" style="left:870.00px;top:2216.78px;font:400 23px/1 'Liberation Mono', monospace;line-height:normal;color:#c3c0b6;letter-spacing:-0.450px;white-space:pre;">cat /workspace/targets/hosts.txt | while read host; do</span>
<span class="a t" id="n3c2" style="left:870.00px;top:2249.93px;font:400 23px/1 'Liberation Mono', monospace;line-height:normal;color:#c3c0b6;letter-spacing:-0.450px;white-space:pre;">  echo &quot;$host -&gt; 127.0.0.1&quot; &gt;&gt; /workspace/dns-resolved.txt</span>
<span class="a t" id="n3c3" style="left:870.00px;top:2283.08px;font:400 23px/1 'Liberation Mono', monospace;line-height:normal;color:#c3c0b6;letter-spacing:-0.450px;white-space:pre;">done</span>
<span class="a t" id="n3c4" style="left:870.00px;top:2316.23px;font:400 23px/1 'Liberation Mono', monospace;line-height:normal;color:#c3c0b6;letter-spacing:-0.450px;white-space:pre;">echo &quot;DNS resolution complete&quot;</span>
<div class="a" style="left:1204.80px;top:2064.30px;width:16.00px;height:16.00px;background:#45463e;border-radius:8px;box-shadow:0 0 0 4px #262624;"></div>
<div class="a" style="left:1204.80px;top:2363.80px;width:16.00px;height:16.00px;background:#45463e;border-radius:8px;box-shadow:0 0 0 4px #262624;"></div>
</div>
</div>
<div class="a" style="left:287.80px;top:2238.00px;width:52.40px;height:208.00px;background:#fefefe;box-shadow:0 0 4px rgba(0,0,0,.15);"></div>
<div class="a" style="left:287.80px;top:2288.00px;width:52.40px;height:2.00px;background:#eeedea;"></div>
<div class="a" style="left:287.80px;top:2340.00px;width:52.40px;height:2.00px;background:#eeedea;"></div>
<div class="a" style="left:287.80px;top:2392.00px;width:52.40px;height:2.00px;background:#eeedea;"></div>
<svg class="a" style="left:302px;top:2251px" width="24" height="24" viewBox="0 0 32 32" fill="#c8c5b9"><path d="M32 18.133H18.133V32h-4.266V18.133H0v-4.266h13.867V0h4.266v13.867H32z"/></svg>
<svg class="a" style="left:302px;top:2313.400px" width="24" height="3.200" viewBox="0 0 32 4.200" fill="#c8c5b9"><path d="M0 0h32v4.200H0z"/></svg>
<svg class="a" style="left:302px;top:2356px" width="24" height="22.500" viewBox="0 0 32 30" fill="#c8c5b9"><path d="M3.692 4.630c0-.53.4-.938.939-.938h5.215V0H4.708C2.130 0 0 2.054 0 4.630v5.216h3.692V4.631zM27.354 0h-5.200v3.692h5.170c.53 0 .984.4.984.939v5.215H32V4.631A4.624 4.624 0 0027.354 0zm.954 24.830c0 .532-.4.940-.939.940h-5.215v3.768h5.215c2.577 0 4.631-2.130 4.631-4.707v-5.139h-3.692v5.139zm-23.677.940c-.531 0-.939-.4-.939-.940v-5.138H0v5.139c0 2.577 2.130 4.707 4.708 4.707h5.138V25.770H4.631z"/></svg>
<svg class="a" style="left:303px;top:2409px" width="22" height="22" viewBox="0 0 22 22" fill="none" stroke="#c8c5b9" stroke-width="2.400"><path d="M17.500 4.500l-5.500 5.500M4.500 17.500l5.500-5.500"/><path d="M12.500 1.500h8v8zM1.500 12.500v8h8z" fill="#c8c5b9" stroke="none"/></svg>
<div class="a" style="left:2866.00px;top:528.00px;width:9.50px;height:1950.00px;background:#383832;"></div>
<div class="a" style="left:2908.00px;top:544.00px;width:1235.50px;height:71.00px;background:#1b1b19;border-radius:17px;"></div>
<div class="a" style="left:2916.00px;top:552.20px;width:406.60px;height:55.40px;background:#272725;border-radius:13px;border:2px solid #2b2b28;"></div>
<span class="a t" id="tab1" style="left:3050.00px;top:563.75px;font:400 29px/1 'Liberation Sans', sans-serif;line-height:normal;color:#c3c0b6;letter-spacing:0.667px;white-space:pre;-webkit-text-stroke:0.4px #c3c0b6;">Properties</span>
<span class="a t" id="tab2" style="left:3487.50px;top:563.75px;font:400 29px/1 'Liberation Sans', sans-serif;line-height:normal;color:#c3c0b6;letter-spacing:0.750px;white-space:pre;-webkit-text-stroke:0.4px #c3c0b6;">Steps</span>
<span class="a t" id="tab3" style="left:3895.50px;top:563.75px;font:400 29px/1 'Liberation Sans', sans-serif;line-height:normal;color:#c3c0b6;letter-spacing:-0.333px;white-space:pre;-webkit-text-stroke:0.4px #c3c0b6;">YAML</span>
<div class="a" style="left:2875.50px;top:632.00px;width:1300.50px;height:2.00px;background:#3e3e38;"></div>
<svg class="a ic" style="left:2908.00px;top:688.20px;" width="32" height="32" viewBox="0 0 24 24" fill="none" stroke="#c3c0b6" stroke-width="2" stroke-linecap="round" stroke-linejoin="round"><path d="M21 8a2 2 0 0 0-1-1.730l-7-4a2 2 0 0 0-2 0l-7 4A2 2 0 0 0 3 8v8a2 2 0 0 0 1 1.730l7 4a2 2 0 0 0 2 0l7-4A2 2 0 0 0 21 16Z"/><path d="m3.3 7 8.700 5 8.700-5"/><path d="M12 22V12"/></svg>
<div class="a" style="left:2957.60px;top:683.50px;width:200.60px;height:41.00px;background:#faf9f5;border-radius:11px;border:2px solid #3a3a36;"></div>
<span class="a t" id="rbadge" style="left:2977.00px;top:690.08px;font:400 25px/1 'Liberation Sans', sans-serif;line-height:normal;color:#30302e;letter-spacing:1.000px;white-space:pre;-webkit-text-stroke:0.9px #30302e;">Remote-Bash</span>
<span class="a t" id="ptitle" style="left:2908.50px;top:748.81px;font:400 38px/1 'Liberation Sans', sans-serif;line-height:normal;color:#c9c6bc;letter-spacing:0.420px;white-space:pre;-webkit-text-stroke:1.1px #c9c6bc;">dns-resolve</span>
<div class="a" style="left:2908.00px;top:846.00px;width:1235.50px;height:2.00px;background:#3e3e38;"></div>
<span class="a t" id="lname" style="left:2907.50px;top:893.55px;font:400 29px/1 'Liberation Sans', sans-serif;line-height:normal;color:#c9c6bc;letter-spacing:0.333px;white-space:pre;-webkit-text-stroke:0.5px #c9c6bc;">Name</span>
<div class="a" style="left:2908.00px;top:941.00px;width:1235.50px;height:70.70px;background:#343330;border-radius:14px;border:2px solid #43423d;"></div>
<span class="a t" id="iname" style="left:2934.40px;top:961.05px;font:400 29px/1 'Liberation Sans', sans-serif;line-height:normal;color:#bdbab0;letter-spacing:0.450px;white-space:pre;">dns-resolve</span>
<span class="a t" id="lcmd" style="left:2907.50px;top:1063.76px;font:400 29px/1 'Liberation Sans', sans-serif;line-height:normal;color:#c9c6bc;letter-spacing:0.500px;white-space:pre;-webkit-text-stroke:0.5px #c9c6bc;">Command</span>
<div class="a" style="left:4073.00px;top:1045.00px;width:70.50px;height:70.00px;background:#282826;border-radius:14px;border:4px solid #3e3e38;"></div>
<svg class="a ic" style="left:4092.20px;top:1064.00px;" width="32" height="32" viewBox="0 0 24 24" fill="none" stroke="#78d665" stroke-width="2" stroke-linecap="round" stroke-linejoin="round"><rect x="8" y="2" width="8" height="4" rx="1" ry="1"/><path d="M16 4h2a2 2 0 0 1 2 2v14a2 2 0 0 1-2 2H6a2 2 0 0 1-2-2V6a2 2 0 0 1 2-2h2"/></svg>
<div class="a" style="left:2908.00px;top:1133.00px;width:1235.50px;height:238.00px;background:#222220;border-radius:14px;border:2px solid #3e3e38;"></div>
<span class="a t" id="cb0" style="left:2937.80px;top:1167.17px;font:400 25px/1 'Liberation Mono', monospace;line-height:normal;color:#b2b7c1;letter-spacing:-0.550px;white-space:pre;"><span style="color:#e5c07b">echo</span> <span style="color:#98c379">&quot;Resolving DNS for </span><span style="color:#d19a66">$TARGET_DOMAIN</span><span style="color:#98c379">&quot;</span></span>
<span class="a t" id="cb1" style="left:2937.80px;top:1203.17px;font:400 25px/1 'Liberation Mono', monospace;line-height:normal;color:#b2b7c1;letter-spacing:-0.550px;white-space:pre;"><span style="color:#b2b7c1">cat /workspace/targets/hosts.txt | </span><span style="color:#c678dd">while</span> <span style="color:#e5c07b">read</span><span style="color:#b2b7c1"> host; </span><span style="color:#c678dd">do</span></span>
<span class="a t" id="cb2" style="left:2937.80px;top:1239.17px;font:400 25px/1 'Liberation Mono', monospace;line-height:normal;color:#b2b7c1;letter-spacing:-0.550px;white-space:pre;">  <span style="color:#e5c07b">echo</span> <span style="color:#98c379">&quot;</span><span style="color:#d19a66">$host</span><span style="color:#98c379"> -&gt; 127.0.0.1&quot;</span><span style="color:#b2b7c1"> &gt;&gt; /workspace/dns-resolved.txt</span></span>
<span class="a t" id="cb3" style="left:2937.80px;top:1275.17px;font:400 25px/1 'Liberation Mono', monospace;line-height:normal;color:#b2b7c1;letter-spacing:-0.550px;white-space:pre;"><span style="color:#c678dd">done</span></span>
<span class="a t" id="cb4" style="left:2937.80px;top:1311.17px;font:400 25px/1 'Liberation Mono', monospace;line-height:normal;color:#b2b7c1;letter-spacing:-0.550px;white-space:pre;"><span style="color:#e5c07b">echo</span> <span style="color:#98c379">&quot;DNS resolution complete&quot;</span></span>
<span class="a t" id="lrun" style="left:2907.50px;top:1402.26px;font:400 29px/1 'Liberation Sans', sans-serif;line-height:normal;color:#c9c6bc;letter-spacing:-0.200px;white-space:pre;-webkit-text-stroke:0.5px #c9c6bc;">Runner</span>
<div class="a" style="left:2908.00px;top:1449.00px;width:1235.50px;height:66.50px;background:#222220;border-radius:14px;border:2px solid #3e3e38;"></div>
<span class="a t" id="irun" style="left:2925.00px;top:1469.17px;font:400 25px/1 'Liberation Mono', monospace;line-height:normal;color:#c8c5bb;letter-spacing:-0.550px;white-space:pre;">docker</span>
<span class="a t" id="lrc" style="left:2907.50px;top:1546.26px;font:400 29px/1 'Liberation Sans', sans-serif;line-height:normal;color:#c9c6bc;letter-spacing:0.333px;white-space:pre;-webkit-text-stroke:0.5px #c9c6bc;">Runner Config</span>
<div class="a" style="left:2908.00px;top:1593.00px;width:1235.50px;height:418.50px;background:#222220;border-radius:14px;border:2px solid #3e3e38;"></div>
<span class="a t" id="jb0" style="left:2937.80px;top:1627.17px;font:400 25px/1 'Liberation Mono', monospace;line-height:normal;color:#b2b7c1;letter-spacing:-0.550px;white-space:pre;"><span style="color:#b2b7c1">{</span></span>
<span class="a t" id="jb1" style="left:2937.80px;top:1663.17px;font:400 25px/1 'Liberation Mono', monospace;line-height:normal;color:#b2b7c1;letter-spacing:-0.550px;white-space:pre;">  <span style="color:#98c379">&quot;image&quot;</span><span style="color:#b2b7c1">: </span><span style="color:#98c379">&quot;alpine:latest&quot;</span><span style="color:#b2b7c1">,</span></span>
<span class="a t" id="jb2" style="left:2937.80px;top:1699.17px;font:400 25px/1 'Liberation Mono', monospace;line-height:normal;color:#b2b7c1;letter-spacing:-0.550px;white-space:pre;">  <span style="color:#98c379">&quot;env&quot;</span><span style="color:#b2b7c1">: {</span></span>
<span class="a t" id="jb3" style="left:2937.80px;top:1735.17px;font:400 25px/1 'Liberation Mono', monospace;line-height:normal;color:#b2b7c1;letter-spacing:-0.550px;white-space:pre;">    <span style="color:#98c379">&quot;TARGET_DOMAIN&quot;</span><span style="color:#b2b7c1">: </span><span style="color:#98c379">&quot;{{target}}&quot;</span></span>
<span class="a t" id="jb4" style="left:2937.80px;top:1771.17px;font:400 25px/1 'Liberation Mono', monospace;line-height:normal;color:#b2b7c1;letter-spacing:-0.550px;white-space:pre;">  <span style="color:#b2b7c1">},</span></span>
<span class="a t" id="jb5" style="left:2937.80px;top:1807.17px;font:400 25px/1 'Liberation Mono', monospace;line-height:normal;color:#b2b7c1;letter-spacing:-0.550px;white-space:pre;">  <span style="color:#98c379">&quot;volumes&quot;</span><span style="color:#b2b7c1">: [</span></span>
<span class="a t" id="jb6" style="left:2937.80px;top:1843.17px;font:400 25px/1 'Liberation Mono', monospace;line-height:normal;color:#b2b7c1;letter-spacing:-0.550px;white-space:pre;">    <span style="color:#98c379">&quot;{{output_dir}}:/workspace&quot;</span></span>
<span class="a t" id="jb7" style="left:2937.80px;top:1879.17px;font:400 25px/1 'Liberation Mono', monospace;line-height:normal;color:#b2b7c1;letter-spacing:-0.550px;white-space:pre;">  <span style="color:#b2b7c1">],</span></span>
<span class="a t" id="jb8" style="left:2937.80px;top:1915.17px;font:400 25px/1 'Liberation Mono', monospace;line-height:normal;color:#b2b7c1;letter-spacing:-0.550px;white-space:pre;">  <span style="color:#98c379">&quot;workdir&quot;</span><span style="color:#b2b7c1">: </span><span style="color:#98c379">&quot;/workspace&quot;</span></span>
<span class="a t" id="jb9" style="left:2937.80px;top:1951.17px;font:400 25px/1 'Liberation Mono', monospace;line-height:normal;color:#b2b7c1;letter-spacing:-0.550px;white-space:pre;"><span style="color:#b2b7c1">}</span></span>
<div class="a" style="left:2908.00px;top:2059.50px;width:1235.50px;height:2.00px;background:#3e3e38;"></div>
<svg class="a ic" style="left:2909.00px;top:2115.00px;" width="30" height="30" viewBox="0 0 24 24" fill="none" stroke="#b7b5a9" stroke-width="2" stroke-linecap="round" stroke-linejoin="round"><circle cx="12" cy="12" r="10"/><path d="M12 6v6l4 2"/></svg>
<span class="a t" id="timeout" style="left:2957.00px;top:2113.76px;font:400 29px/1 'Liberation Sans', sans-serif;line-height:normal;color:#b7b5a9;letter-spacing:0.364px;white-space:pre;">Timeout: 60s</span>
<div class="a" style="left:2908.00px;top:2197.70px;width:1235.50px;height:2.00px;background:#3e3e38;"></div>
<span class="a t" id="lexp" style="left:2907.50px;top:2246.26px;font:400 29px/1 'Liberation Sans', sans-serif;line-height:normal;color:#c9c6bc;letter-spacing:0.667px;white-space:pre;-webkit-text-stroke:0.5px #c9c6bc;">Exports</span>
<div class="a" style="left:2908.00px;top:2293.00px;width:187.50px;height:42.50px;background:#242422;border-radius:10px;border:2px solid #3e3e38;"></div>
<span class="a t" id="expk" style="left:2930.00px;top:2301.17px;font:700 25px/1 'Liberation Mono', monospace;line-height:normal;color:#cfccc2;letter-spacing:-0.550px;white-space:pre;">dns_output</span>
<span class="a t" id="expv" style="left:3112.00px;top:2301.17px;font:400 25px/1 'Liberation Mono', monospace;line-height:normal;color:#b5b2a8;letter-spacing:-0.550px;white-space:pre;">= {{output_dir}}/dns-resolved.txt</span>
<div class="a" style="left:2908.00px;top:2383.30px;width:1235.50px;height:2.00px;background:#3e3e38;"></div>
<span class="a t" id="llog" style="left:2907.50px;top:2431.76px;font:400 29px/1 'Liberation Sans', sans-serif;line-height:normal;color:#c9c6bc;letter-spacing:1.000px;white-space:pre;-webkit-text-stroke:0.5px #c9c6bc;">Log</span>
<div class="a" style="left:4113.00px;top:2414.50px;width:70.00px;height:70.00px;background:#080807;border-radius:35px;box-shadow:0 0 0 3px #2f2f2d,0 6px 16px rgba(0,0,0,.3);"></div>
<svg class="a" style="left:4130px;top:2434px" width="36" height="36" viewBox="0 0 36 36"><defs><linearGradient id="ng1" gradientUnits="userSpaceOnUse" x1="17" y1="18" x2="29" y2="31"><stop offset="0" stop-color="#fff"/><stop offset="1" stop-color="#fff" stop-opacity="0"/></linearGradient><linearGradient id="ng2" gradientUnits="userSpaceOnUse" x1="0" y1="5" x2="0" y2="19.500"><stop offset="0" stop-color="#fff"/><stop offset="1" stop-color="#fff" stop-opacity="0"/></linearGradient></defs><rect x="5" y="5" width="4.500" height="22.500" fill="#fff"/><path d="M5 5h4.800L30.600 31.800h-5.600L5 8z" fill="url(#ng1)"/><rect x="25" y="5" width="4.200" height="14.500" fill="url(#ng2)"/></svg>
</div></div>
<div class="a" id="rim"></div>
</body></html>
